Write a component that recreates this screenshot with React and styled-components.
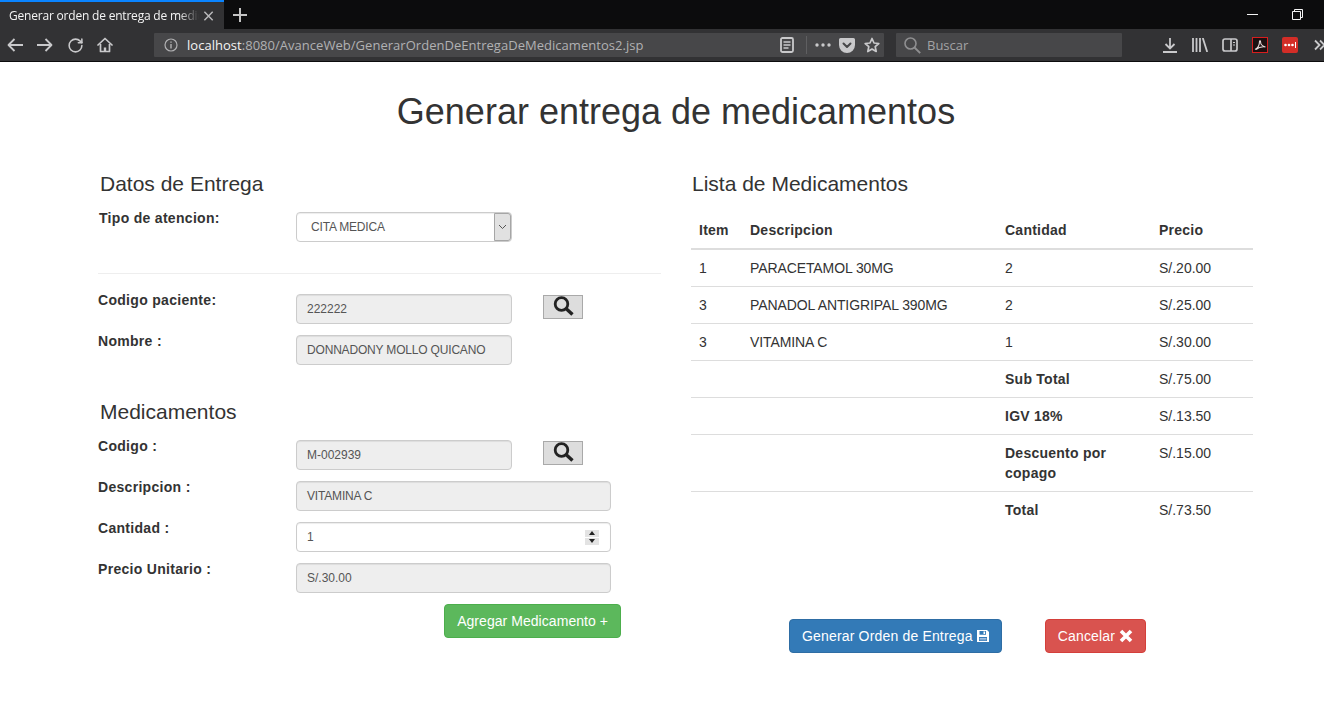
import React from "react";
import styled, { createGlobalStyle } from "styled-components";
import { RotateCw } from "lucide-react";

const GlobalStyle = createGlobalStyle`
  html, body {
    margin: 0;
    background: #fff;
    overflow: hidden;
  }
  body {
    font-family: "Liberation Sans", Arial, sans-serif;
    font-size: 14px;
    line-height: 20px;
    color: #333;
  }
`;

const TabBar = styled.div`
  display: flex;
  align-items: stretch;
  height: 29px;
  background: #0c0c0d;
  color: #f4f4f4;
`;

const Tab = styled.div`
  display: flex;
  align-items: center;
  width: 224px;
  box-sizing: border-box;
  padding: 0 10px 0 9px;
  background: #323234;
  border-top: 2px solid #0a84ff;
  font-family: "Open Sans", sans-serif;
  font-size: 12px;
  letter-spacing: -0.2px;
  color: #b9b9bb;
`;

const TabTitle = styled.span`
  flex: 1;
  white-space: nowrap;
  color: #f4f4f4;
  -webkit-mask-image: linear-gradient(to right, #000 170px, transparent 190px);
  mask-image: linear-gradient(to right, #000 170px, transparent 190px);
`;

const NewTab = styled.div`
  display: flex;
  align-items: center;
  margin-left: 9px;
  color: #c4c4c4;
`;

const WindowControls = styled.div`
  display: flex;
  align-items: center;
  margin-left: auto;
  padding-right: 4px;
`;

const WindowButton = styled.div`
  display: flex;
  justify-content: center;
  width: 45px;
`;

const Toolbar = styled.div`
  display: flex;
  align-items: center;
  height: 32px;
  background: #323234;
  border-bottom: 1px solid #0c0c0d;
  overflow: hidden;
  color: #c9c9cb;
`;

const NavButton = styled.div`
  flex: none;
  display: flex;
  align-items: center;
  justify-content: center;
  width: 30px;
  height: 24px;
`;

const UrlBar = styled.div`
  flex: none;
  display: flex;
  align-items: center;
  width: 730px;
  height: 24px;
  margin-left: 34px;
  background: #474749;
  border-radius: 1px;
  font-family: "Open Sans", sans-serif;
  font-size: 13px;
  letter-spacing: 0.03px;
  white-space: nowrap;
`;

const InfoSlot = styled.div`
  display: flex;
  justify-content: center;
  width: 33px;
`;

const UrlText = styled.span`
  flex: 1;
  color: #b1b1b3;
  b {
    font-weight: 400;
    color: #f4f4f4;
  }
`;

const UrlAction = styled.div`
  display: flex;
  align-items: center;
  justify-content: center;
  width: ${(p) => p.$w || 24}px;
`;

const UrlDivider = styled.div`
  width: 1px;
  height: 18px;
  margin: 0 5px 0 7px;
  background: #5f5f61;
`;

const SearchBar = styled.div`
  flex: none;
  display: flex;
  align-items: center;
  gap: 6px;
  width: 226px;
  height: 24px;
  box-sizing: border-box;
  padding-left: 8px;
  margin: 0 33px 0 12px;
  background: #474749;
  border-radius: 1px;
  font-family: "Open Sans", sans-serif;
  font-size: 13px;
  color: #a3a3a5;
`;

const Page = styled.main`
  height: 656px;
  padding: 30px 0 0 98px;
  overflow: hidden;
`;

const Title = styled.h1`
  width: 1156px;
  margin: 0 0 41px;
  font-size: 36px;
  line-height: 40px;
  font-weight: 400;
  text-align: center;
  color: #333;
`;

const Columns = styled.div`
  display: flex;
  gap: 30px;
`;

const LeftColumn = styled.section`
  width: 563px;
`;

const RightColumn = styled.section`
  width: 562px;
`;

const Heading = styled.h3`
  margin: 0 0 17px;
  padding-left: ${(p) => p.$indent}px;
  font-size: 21px;
  line-height: 22px;
  font-weight: 400;
  color: #333;
`;

const SubHeading = styled(Heading)`
  margin-top: 36px;
`;

const Row = styled.div`
  display: flex;
  align-items: flex-start;
  height: 30px;
  margin-bottom: 11px;
`;

const Label = styled.label`
  width: ${(p) => (p.$nudge ? 197 : 198)}px;
  margin-left: ${(p) => (p.$nudge ? 1 : 0)}px;
  line-height: 12px;
  font-weight: 700;
  letter-spacing: 0.3px;
`;

const Field = styled.div`
  display: flex;
  align-items: center;
  width: ${(p) => (p.$wide ? 315 : 216)}px;
  height: 30px;
  box-sizing: border-box;
  padding-left: 10px;
  border: 1px solid #ccc;
  border-radius: 4px;
  background: ${(p) => (p.$disabled ? "#eee" : "#fff")};
  box-shadow: inset 0 1px 1px rgba(0, 0, 0, 0.075);
  font-size: 12px;
  letter-spacing: ${(p) => (p.$caps ? "-0.18px" : "0")};
  color: #555;
`;

const SelectField = styled(Field)`
  justify-content: space-between;
  padding-left: 14px;
`;

const SelectArrow = styled.div`
  display: flex;
  align-items: center;
  justify-content: center;
  width: 17px;
  height: 28px;
  box-sizing: border-box;
  background: #e1e1e1;
  border: 1px solid #a6a6a6;
  border-radius: 0 3px 3px 0;
`;

const Spinner = styled.div`
  display: flex;
  flex-direction: column;
  gap: 1px;
  margin-left: auto;
  margin-right: 11px;
`;

const SpinButton = styled.div`
  display: flex;
  align-items: center;
  justify-content: center;
  width: 14px;
  height: 7px;
  background: #e3e3e3;
  color: #222;
`;

const LookupButton = styled.button`
  display: flex;
  align-items: center;
  justify-content: center;
  width: 40px;
  height: 24px;
  box-sizing: border-box;
  margin: 1px 0 0 31px;
  padding: 0 0 3px;
  background: #ddd;
  border: 1px solid #a9a9a9;
`;

const Divider = styled.hr`
  height: 1px;
  margin: 31px 0 20px;
  border: 0;
  background: #eee;
`;

const Button = styled.button`
  display: inline-flex;
  align-items: center;
  height: 34px;
  box-sizing: border-box;
  padding: 0 12px;
  border: 1px solid ${(p) => p.$border};
  border-radius: 4px;
  background: ${(p) => p.$bg};
  color: #fff;
  font-family: inherit;
  font-size: 14px;
  letter-spacing: ${(p) => p.$track || 0.05}px;
  white-space: pre;
`;

const AddRow = styled.div`
  display: flex;
  justify-content: flex-end;
  width: 523px;
`;

const Table = styled.table`
  width: 562px;
  border-collapse: collapse;
  table-layout: fixed;
`;

const Th = styled.th`
  box-sizing: border-box;
  width: ${(p) => p.$w}px;
  padding: 8px;
  text-align: left;
  font-weight: 700;
  letter-spacing: 0.25px;
  border-bottom: 2px solid #ddd;
`;

const Td = styled.td`
  padding: 8px;
  vertical-align: top;
  border-top: 1px solid #ddd;
  font-weight: ${(p) => (p.$bold ? 700 : 400)};
  letter-spacing: ${(p) => (p.$bold ? "0.25px" : p.$caps ? "-0.1px" : "0")};
  tbody tr:first-child & {
    border-top: 0;
  }
`;

const Actions = styled.div`
  display: flex;
  gap: 43px;
  margin: 91px 0 0 98px;
`;

const TabClose = () => (
  <svg width="12" height="12" viewBox="0 0 12 12" fill="none" stroke="currentColor" strokeWidth="1.6">
    <path d="M1.500 1.500l9 9M10.500 1.500l-9 9" />
  </svg>
);

const PlusIcon = () => (
  <svg width="14" height="14" viewBox="0 0 14 14" fill="none" stroke="currentColor" strokeWidth="2">
    <path d="M7 0v14M0 7h14" />
  </svg>
);

const Back = () => (
  <svg width="16" height="14" viewBox="0 0 16 14" fill="none" stroke="currentColor" strokeWidth="1.800" strokeLinejoin="round">
    <path d="M16 7H2M7.500 1 1.500 7l6 6" />
  </svg>
);

const Forward = () => (
  <svg width="16" height="14" viewBox="0 0 16 14" fill="none" stroke="currentColor" strokeWidth="1.800" strokeLinejoin="round">
    <path d="M0 7h14M8.500 1l6 6-6 6" />
  </svg>
);

const Home = () => (
  <svg width="16" height="16" viewBox="0 0 16 16" fill="none" stroke="currentColor" strokeWidth="1.700" strokeLinejoin="round">
    <path d="M1 8 8 1.500 15 8" strokeLinecap="round" />
    <path d="M3.500 7v7.500h9V7" />
    <rect x="6.800" y="10.500" width="2.400" height="4" fill="currentColor" stroke="none" />
  </svg>
);

const Info = () => (
  <svg width="14" height="14" viewBox="0 0 14 14" fill="none" stroke="#b1b1b3" strokeWidth="1.200">
    <circle cx="7" cy="7" r="6" />
    <path d="M7 6v4.500M7 3.500v1.200" strokeWidth="1.400" />
  </svg>
);

const Reader = () => (
  <svg width="14" height="16" viewBox="0 0 14 16" fill="none" stroke="currentColor">
    <rect x="1" y="1" width="12" height="14" rx="1.500" strokeWidth="1.800" />
    <path d="M3.500 5h7M3.500 8h7M3.500 11h5" strokeWidth="1.300" />
  </svg>
);

const Dots = () => (
  <svg width="16" height="4" viewBox="0 0 16 4" fill="currentColor">
    <circle cx="2" cy="2" r="1.700" />
    <circle cx="8" cy="2" r="1.700" />
    <circle cx="14" cy="2" r="1.700" />
  </svg>
);

const Pocket = () => (
  <svg width="16" height="15" viewBox="0 0 16 15">
    <path fill="#c9c9cb" d="M1.500 0h13A1.500 1.500 0 0 1 16 1.500V7a8 8 0 0 1-16 0V1.500A1.500 1.500 0 0 1 1.500 0z" />
    <path fill="none" stroke="#474749" strokeWidth="2" strokeLinecap="round" strokeLinejoin="round" d="M4.500 5.500 8 9l3.500-3.500" />
  </svg>
);

const StarIcon = () => (
  <svg width="16" height="16" viewBox="0 0 16 16" fill="none" stroke="currentColor" strokeWidth="1.700" strokeLinejoin="round">
    <path d="M8 1.500 10 6l4.800.5-3.600 3.200 1 4.800L8 12l-4.200 2.500 1-4.800L1.200 6.500 6 6z" />
  </svg>
);

const Magnifier = () => (
  <svg width="17" height="17" viewBox="0 0 17 17" fill="none" stroke="#8f8f91" strokeWidth="1.600">
    <circle cx="6.500" cy="6.500" r="5.500" />
    <path d="M10.500 10.500 16.200 16.200" strokeWidth="1.900" />
  </svg>
);

const Download = () => (
  <svg width="14" height="15" viewBox="0 0 14 15" fill="none" stroke="currentColor" strokeWidth="1.800">
    <path d="M7 0v10M2.500 6 7 10.500 11.500 6M0 14h14" />
  </svg>
);

const Library = () => (
  <svg width="16" height="14" viewBox="0 0 16 14" fill="none" stroke="currentColor" strokeWidth="1.800">
    <path d="M1 0v14M4.500 0v14M8 0v14M10.800 0 15.200 14" />
  </svg>
);

const Sidebar = () => (
  <svg width="16" height="14" viewBox="0 0 16 14" fill="none" stroke="currentColor" strokeWidth="1.700">
    <rect x="1" y="1" width="14" height="12" rx="2" />
    <path d="M9 1v12" />
    <path d="M11 4.500h2M11 7h2" strokeWidth="1.200" />
  </svg>
);

const PdfIcon = () => (
  <svg width="16" height="16" viewBox="0 0 16 16">
    <rect x="0.500" y="0.500" width="15" height="15" fill="#1c1011" stroke="#d81e1e" />
    <path fill="none" stroke="#e8dcdc" strokeWidth="1.100" d="M3 12.500c3-1.500 4.500-4.500 4.500-8 0-1 1-1 1 0 0 2.500 2 5 5 5.500-3-.5-6.500 0-9.500 2.500" />
  </svg>
);

const LastPass = () => (
  <svg width="16" height="16" viewBox="0 0 16 16">
    <rect width="16" height="16" rx="2" fill="#d32d27" />
    <circle cx="3.500" cy="8" r="1.300" fill="#fff" />
    <circle cx="7" cy="8" r="1.300" fill="#fff" />
    <circle cx="10.500" cy="8" r="1.300" fill="#fff" />
    <path d="M13.500 5v6" stroke="#fff" />
  </svg>
);

const Chevrons = () => (
  <svg width="12" height="12" viewBox="0 0 12 12" fill="none" stroke="currentColor" strokeWidth="1.800">
    <path d="M1 1.500 5.500 6 1 10.500M6 1.500 10.500 6 6 10.500" />
  </svg>
);

const LookupIcon = () => (
  <svg width="21" height="20" viewBox="0 0 21 20" fill="none" stroke="#222">
    <circle cx="8.500" cy="8" r="6.300" strokeWidth="2.800" />
    <path d="M13 12.500 19.500 18.500" strokeWidth="3.400" />
  </svg>
);

const Save = () => (
  <svg width="12" height="12" viewBox="1 1 12 12">
    <path fill="#fff" fillRule="evenodd" d="M1 1h10l2 2v10H1zM3.500 2v3.800h6.500V2zM7.500 2.600h1.600v2.500H7.500zM3 8v4h8V8z" />
    <path fill="#c8d4ea" d="M3.600 9h6.800v.8H3.600zM3.600 10.500h6.800v.8H3.600z" />
  </svg>
);

const Remove = () => (
  <svg width="14" height="14" viewBox="0 0 14 14" fill="none" stroke="#fff" strokeWidth="3.600">
    <path d="M2 2l10 10M12 2 2 12" />
  </svg>
);

const rows = [
  ["1", "PARACETAMOL 30MG", "2", "S/.20.00"],
  ["3", "PANADOL ANTIGRIPAL 390MG", "2", "S/.25.00"],
  ["3", "VITAMINA C", "1", "S/.30.00"],
];

const totals = [
  ["Sub Total", "S/.75.00"],
  ["IGV 18%", "S/.13.50"],
  ["Descuento por copago", "S/.15.00"],
  ["Total", "S/.73.50"],
];

export default function App() {
  return (
    <>
      <GlobalStyle />
      <TabBar>
        <Tab>
          <TabTitle>Generar orden de entrega de medic</TabTitle>
          <TabClose />
        </Tab>
        <NewTab>
          <PlusIcon />
        </NewTab>
        <WindowControls>
          <WindowButton>
            <svg width="11" height="11" viewBox="0 0 11 11" stroke="currentColor">
              <path d="M0 5.500h11" />
            </svg>
          </WindowButton>
          <WindowButton>
            <svg width="11" height="11" viewBox="0 0 11 11" fill="none" stroke="currentColor">
              <path d="M.5 2.500h8v8h-8zM2.500 2.500v-2h8v8h-2" />
            </svg>
          </WindowButton>
        </WindowControls>
      </TabBar>
      <Toolbar>
        <NavButton><Back /></NavButton>
        <NavButton><Forward /></NavButton>
        <NavButton><RotateCw size={17} strokeWidth={2.2} /></NavButton>
        <NavButton><Home /></NavButton>
        <UrlBar>
          <InfoSlot><Info /></InfoSlot>
          <UrlText>
            <b>localhost</b>:8080/AvanceWeb/GenerarOrdenDeEntregaDeMedicamentos2.jsp
          </UrlText>
          <UrlAction><Reader /></UrlAction>
          <UrlDivider />
          <UrlAction $w={22}><Dots /></UrlAction>
          <UrlAction $w={26}><Pocket /></UrlAction>
          <UrlAction><StarIcon /></UrlAction>
        </UrlBar>
        <SearchBar>
          <Magnifier />
          Buscar
        </SearchBar>
        <NavButton><Download /></NavButton>
        <NavButton><Library /></NavButton>
        <NavButton><Sidebar /></NavButton>
        <NavButton><PdfIcon /></NavButton>
        <NavButton><LastPass /></NavButton>
        <NavButton><Chevrons /></NavButton>
      </Toolbar>
      <Page>
        <Title>Generar entrega de medicamentos</Title>
        <Columns>
          <LeftColumn>
            <Heading $indent={2}>Datos de Entrega</Heading>
            <Row>
              <Label $nudge>Tipo de atencion:</Label>
              <SelectField $caps>
                CITA MEDICA
                <SelectArrow>
                  <svg width="9" height="6" viewBox="0 0 9 6" fill="none" stroke="#555">
                    <path d="M1 1l3.500 3.500L8 1" />
                  </svg>
                </SelectArrow>
              </SelectField>
            </Row>
            <Divider />
            <Row>
              <Label>Codigo paciente:</Label>
              <Field $disabled>222222</Field>
              <LookupButton><LookupIcon /></LookupButton>
            </Row>
            <Row>
              <Label>Nombre :</Label>
              <Field $disabled $caps>DONNADONY MOLLO QUICANO</Field>
            </Row>
            <SubHeading $indent={2}>Medicamentos</SubHeading>
            <Row>
              <Label>Codigo :</Label>
              <Field $disabled>M-002939</Field>
              <LookupButton><LookupIcon /></LookupButton>
            </Row>
            <Row>
              <Label>Descripcion :</Label>
              <Field $disabled $wide $caps>VITAMINA C</Field>
            </Row>
            <Row>
              <Label>Cantidad :</Label>
              <Field $wide>
                1
                <Spinner>
                  <SpinButton>
                    <svg width="6" height="4" viewBox="0 0 6 4" fill="currentColor"><path d="M3 0l3 4H0z" /></svg>
                  </SpinButton>
                  <SpinButton>
                    <svg width="6" height="4" viewBox="0 0 6 4" fill="currentColor"><path d="M0 0h6L3 4z" /></svg>
                  </SpinButton>
                </Spinner>
              </Field>
            </Row>
            <Row>
              <Label>Precio Unitario :</Label>
              <Field $disabled $wide>S/.30.00</Field>
            </Row>
            <AddRow>
              <Button $bg="#5cb85c" $border="#4cae4c">Agregar Medicamento +</Button>
            </AddRow>
          </LeftColumn>
          <RightColumn>
            <Heading $indent={1}>Lista de Medicamentos</Heading>
            <Table>
              <thead>
                <tr>
                  <Th $w={51}>Item</Th>
                  <Th $w={255}>Descripcion</Th>
                  <Th $w={154}>Cantidad</Th>
                  <Th $w={102}>Precio</Th>
                </tr>
              </thead>
              <tbody>
                {rows.map((r, i) => (
                  <tr key={i}>
                    {r.map((c, j) => (
                      <Td key={j} $caps={j === 1}>{c}</Td>
                    ))}
                  </tr>
                ))}
                {totals.map(([name, value]) => (
                  <tr key={name}>
                    <Td />
                    <Td />
                    <Td $bold>{name}</Td>
                    <Td>{value}</Td>
                  </tr>
                ))}
              </tbody>
            </Table>
            <Actions>
              <Button $bg="#337ab7" $border="#2e6da4" $track={0.17}>Generar Orden de Entrega <Save /></Button>
              <Button $bg="#d9534f" $border="#d43f3a" $track={0.18}>Cancelar <Remove /></Button>
            </Actions>
          </RightColumn>
        </Columns>
      </Page>
    </>
  );
}
